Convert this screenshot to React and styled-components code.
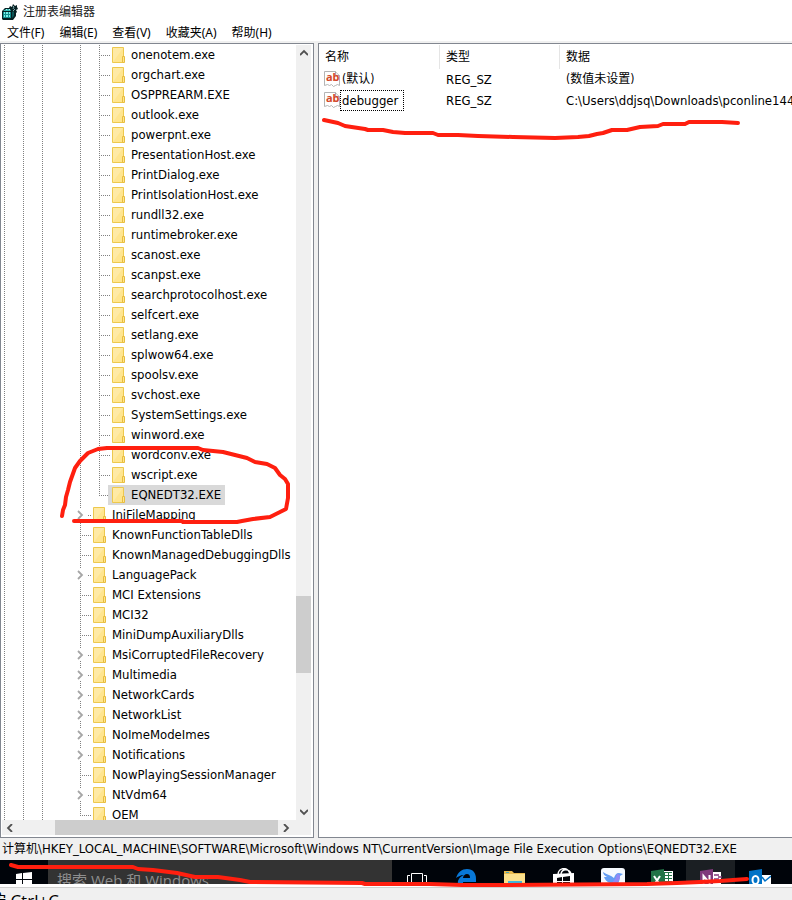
import React from "react";
import styled, { createGlobalStyle, css } from "styled-components";

const GlobalStyle = createGlobalStyle`
  * { box-sizing: border-box; }
  html, body { margin: 0; padding: 0; }
  body {
    font-family: "DejaVu Sans Condensed", "Noto Sans CJK SC", sans-serif;
    font-size: 12px;
    color: #000;
    background: #f0f0f0;
  }
  button { font: inherit; color: inherit; border: 0; padding: 0; background: none; }
`;

const Screen = styled.div`
  position: relative;
  display: flex;
  flex-direction: column;
  height: 100vh;
  overflow: hidden;
`;

const TitleBar = styled.header`
  display: flex;
  align-items: center;
  gap: 5px;
  height: 23px;
  padding-left: 2px;
  background: #fff;
`;

const Title = styled.h1`
  margin: 0;
  font-size: 12px;
  font-weight: 400;
  line-height: 20px;
  color: #222;
`;

const MenuBar = styled.nav`
  display: flex;
  gap: 1px;
  height: 18px;
  background: #fff;
`;

const MenuButton = styled.button`
  padding: 0 7px;
  font-family: "Noto Sans", "Noto Sans CJK SC", sans-serif;
  line-height: 20px;
  white-space: nowrap;
`;

const Panes = styled.main`
  display: grid;
  grid-template-columns: 314px minmax(0, 1fr);
  gap: 4px;
  flex: 1;
  min-height: 0;
  padding-top: 2px;
`;

const TreePane = styled.section`
  display: grid;
  grid-template-columns: minmax(0, 1fr) 15px;
  grid-template-rows: minmax(0, 1fr) 15px;
  padding: 1px 2px 2px 1px;
  border: 1px solid #828790;
  background: #fff;
  min-height: 0;
`;

const Tree = styled.ul`
  margin: 0;
  padding: 0 0 0 2px;
  list-style: none;
  overflow: hidden;
`;

const TreeRow = styled.li`
  display: flex;
  height: 20px;
`;

const verticalDots = css`
  background-image: repeating-linear-gradient(to bottom, #808080 0 1px, transparent 1px 2px);
  background-repeat: no-repeat;
`;

const Guide = styled.span`
  flex: none;
  width: 19px;
  ${verticalDots}
  background-size: ${(p) => (p.$blank ? "0 0" : "1px 100%")};
`;

const Branch = styled.span`
  flex: none;
  width: 11px;
  background-image:
    repeating-linear-gradient(to bottom, #808080 0 1px, transparent 1px 2px),
    repeating-linear-gradient(to right, #808080 0 1px, transparent 1px 2px);
  background-repeat: no-repeat;
  background-size: 1px ${(p) => (p.$last ? "50%" : "100%")}, 11px 1px;
  background-position: 0 0, 0 10px;
`;

const Expander = styled.button`
  flex: none;
  width: 19px;
  height: 20px;
  margin: 0 -4px 0 -4px;
`;

const Node = styled.button`
  display: flex;
  align-items: center;
  gap: 5px;
  height: 20px;
  margin-left: -2px;
  padding: 0 4px;
  font-size: 13px;
  line-height: 20px;
  white-space: nowrap;
  background: ${(p) => (p.$selected ? "#d9d9d9" : "transparent")};
`;

const NodeLabel = styled.span`
  line-height: 20px;
`;

const VerticalBar = styled.div`
  display: flex;
  flex-direction: column;
  background: #f0f0f0;
`;

const HorizontalBar = styled.div`
  grid-column: 1 / -1;
  display: flex;
  padding-right: 17px;
  background: #f0f0f0;
`;

const ArrowButton = styled.button`
  flex: none;
  width: 16px;
  height: 16px;
  display: grid;
  place-items: center;
`;

const TrackSpace = styled.span`
  flex: ${(p) => p.$share} 1 0;
`;

const Thumb = styled.span`
  flex: ${(p) => p.$share} 1 0;
  background: #cdcdcd;
`;

const ListPane = styled.section`
  min-width: 0;
  padding-top: 1px;
  border: 1px solid #828790;
  border-right: 0;
  background: #fff;
  overflow: hidden;
`;

const ValueTable = styled.table`
  width: 100%;
  table-layout: fixed;
  border-collapse: separate;
  border-spacing: 0;
`;

const HeadCell = styled.th`
  width: ${(p) => p.$width || "auto"};
  height: 24px;
  padding: 0 6px;
  border-right: 1px solid ${(p) => (p.$width ? "#e5e5e5" : "transparent")};
  text-align: left;
  font-weight: 400;
  line-height: 24px;
`;

const Cell = styled.td`
  height: 21px;
  padding: 0 0 0 6px;
  font-size: ${(p) => (p.$latin ? "13px" : "12px")};
  line-height: 21px;
  white-space: nowrap;
`;

const NameCell = styled(Cell)`
  padding-left: 5px;
`;

const NameBox = styled.div`
  display: flex;
  align-items: center;
`;

const ValueName = styled.span`
  height: 21px;
  padding: 0 5px 0 1px;
  border: 1px dotted ${(p) => (p.$focused ? "#000" : "transparent")};
  font-size: ${(p) => (p.$focused ? "13px" : "12px")};
  line-height: 19px;
`;

const StatusBar = styled.footer`
  height: 22px;
  padding-left: 2px;
  font-size: 13px;
  line-height: 22px;
  white-space: nowrap;
  overflow: hidden;
`;

const RootName = styled.span`
  font-size: 12px;
`;

const Taskbar = styled.div`
  flex: none;
  display: flex;
  height: 24px;
  overflow: hidden;
  background: #00040a;
`;

const StartButton = styled.button`
  flex: none;
  display: grid;
  place-items: center;
  width: 48px;
  height: 40px;
`;

const SearchBox = styled.input`
  flex: 0 0 344px;
  width: 344px;
  height: 40px;
  padding: 0 9px;
  border: 0;
  border-radius: 0;
  background: #333;
  font-family: "Open Sans", "Noto Sans CJK SC", sans-serif;
  font-size: 15px;
  &::placeholder { color: #8f8f8f; opacity: 1; }
`;

const TaskButton = styled.button`
  flex: none;
  display: flex;
  justify-content: center;
  align-items: flex-start;
  width: 49px;
  height: 40px;
  padding-top: 8px;
  background: ${(p) => (p.$active ? "#1b1f23" : "transparent")};
`;

const LowerPage = styled.div`
  flex: none;
  height: 16px;
  border-top: 3px solid #fff;
  background: #f0f0f0;
  overflow: hidden;
`;

const Hint = styled.p`
  margin: 0 0 0 -11px;
  border-top: 1px solid #d0d0d0;
  font-family: "Open Sans", "Noto Sans CJK SC", sans-serif;
  font-size: 17px;
  line-height: 26px;
  white-space: nowrap;
`;

const Marks = styled.svg`
  position: absolute;
  top: 0;
  left: 0;
  pointer-events: none;
`;

const childKeys = [
  "onenotem.exe", "orgchart.exe", "OSPPREARM.EXE", "outlook.exe", "powerpnt.exe",
  "PresentationHost.exe", "PrintDialog.exe", "PrintIsolationHost.exe", "rundll32.exe",
  "runtimebroker.exe", "scanost.exe", "scanpst.exe", "searchprotocolhost.exe",
  "selfcert.exe", "setlang.exe", "splwow64.exe", "spoolsv.exe", "svchost.exe",
  "SystemSettings.exe", "winword.exe", "wordconv.exe", "wscript.exe", "EQNEDT32.EXE",
];

const siblingKeys = [
  ["IniFileMapping", true], ["KnownFunctionTableDlls", false],
  ["KnownManagedDebuggingDlls", false], ["LanguagePack", true],
  ["MCI Extensions", false], ["MCI32", false], ["MiniDumpAuxiliaryDlls", false],
  ["MsiCorruptedFileRecovery", true], ["Multimedia", true], ["NetworkCards", true],
  ["NetworkList", true], ["NoImeModeImes", true], ["Notifications", true],
  ["NowPlayingSessionManager", false], ["NtVdm64", true], ["OEM", false],
];

const FolderIcon = () => (
  <svg width="14" height="16" viewBox="0 0 14 16" aria-hidden="true">
    <path d="M.5.5h11v15H.5z" fill="#ffe58f" stroke="#edc84d" />
    <path d="M1 15V1h10z" fill="#ffeaa5" />
    <path d="M10.5 15.5v-6h2v6z" fill="#ffe58f" stroke="#e8bd3e" />
  </svg>
);

const Chevron = ({ d, color = "#505050" }) => (
  <svg width="8" height="8" viewBox="0 0 8 8" fill="none" stroke={color} strokeWidth="1.8" aria-hidden="true">
    <path d={d} />
  </svg>
);

const ExpandMark = () => (
  <svg width="19" height="20" viewBox="0 0 19 20" fill="none" aria-hidden="true">
    <path d="M4.500 0v4M4.500 16v4" stroke="#808080" strokeDasharray="1 1" />
    <path d="M2 6l4 4-4 4" stroke="#a6a6a6" strokeWidth="1.8" />
    <path d="M12 10.500h4" stroke="#808080" strokeDasharray="1 1" />
  </svg>
);

const RegistryIcon = () => (
  <svg width="16" height="17" viewBox="0 0 16 17" aria-hidden="true">
    <path d="M0 8l3-3h4l1-2 2 1 1-3 2 2 2-1v2l1 2-2 1 1 2-1 1v3l-3 4H1l-1-1z" fill="#062022" />
    <path d="M1 9h8v6H1z" fill="#128f8f" />
    <path d="M1 8l3-2h4l1 2z" fill="#35b9b5" />
    <path d="M2 9h1v2H2zM4 9h2v2H4zM7 9h1v2H7zM2 12h1v2H2zM4 12h2v2H4zM7 12h1v2H7z" fill="#7cf0ea" />
    <path d="M4 6h1v1H4zM7 6h1v1H7z" fill="#a6f5f0" />
    <path d="M11 3l1 1-1 2M13 6l-2 2" stroke="#7ba9ac" fill="none" />
    <path d="M10 9l2-1v5l-2 2z" fill="#0c5557" />
  </svg>
);

const StringIcon = () => (
  <svg width="16" height="17" viewBox="0 0 16 17" aria-hidden="true">
    <path d="M.5 14.500V.5h11l4 4v10l-2-1-2 1-2 1-2-2-2 1-2-1z" fill="#fff" stroke="#b4b4b4" />
    <path d="M11.500.5v4h4" fill="#eee" stroke="#a6a6a6" />
    <text x="2" y="10" fontSize="11" fontWeight="700" fontFamily="Noto Sans, sans-serif" fill="#d3492b">ab</text>
  </svg>
);

const WindowsLogo = () => (
  <svg width="16" height="16" viewBox="0 0 16 16" fill="#fff" aria-hidden="true">
    <path d="M0 2l6-1v6H0zM7 1l9-1v7H7zM0 8h6v7l-6-1zM7 8h9v8l-9-1z" />
  </svg>
);

const TaskViewIcon = () => (
  <svg width="20" height="24" viewBox="0 0 20 24" fill="none" stroke="#fff" aria-hidden="true">
    <path d="M4.500 16.500v-11h11v11zM3 7.500H.5v8H3M17 7.500h2.500v8H17" />
  </svg>
);

const EdgeIcon = () => (
  <svg width="20" height="24" viewBox="0 0 20 24" fill="#0878d8" aria-hidden="true">
    <path d="M0 10C2 4 6 1 11 1c6 0 9 4 9 10v3H7c0 3 3 5 7 5 2 0 4-1 5-2v4c-2 1-4 2-7 2-7 0-11-5-10-10 1-3 3-5 6-6-4 0-6 2-8 3zm7 0h7c0-3-1-4-3-4s-4 2-4 4z" />
  </svg>
);

const ExplorerIcon = () => (
  <svg width="22" height="24" viewBox="0 0 22 24" aria-hidden="true">
    <path d="M0 3h8l2 2h11v15H0z" fill="#e8b94d" />
    <path d="M0 6h21v14H0z" fill="#fbe08c" />
    <path d="M2 4h3v1H2z" fill="#4aa8bd" />
    <path d="M4 13h14v7H4z" fill="#3fb7dc" />
  </svg>
);

const StoreIcon = () => (
  <svg width="22" height="24" viewBox="0 0 22 24" aria-hidden="true">
    <path d="M5 7c0-8 11-9 12 0M8 6c1-6 9-5 10 0" fill="none" stroke="#fff" strokeWidth="1.500" />
    <path d="M0 6l21-1v15l-21-2z" fill="#fff" />
    <path d="M4 10l5-1v4H4zM10 9l7-1v5h-7zM4 14h5v3H4zM10 14h7v4h-7z" fill="#05070b" />
  </svg>
);

const BirdIcon = () => (
  <svg width="24" height="24" viewBox="0 0 24 24" aria-hidden="true">
    <rect width="24" height="24" rx="3" fill="#f5faff" />
    <path d="M2 4c4 3 8 3 11 6 1-3 2-5 5-5l4 1-3 2c0 6-3 10-8 11-3 0-5-1-7-3 2 0 4 0 5-1-3-1-5-3-6-6h3C4 8 2 6 2 4z" fill="#629cf3" />
    <path d="M10 15c4-2 5-6 6-9 2 0 3 1 3 2 0 5-4 9-9 9z" fill="#9288f5" />
  </svg>
);

const ExcelIcon = () => (
  <svg width="22" height="24" viewBox="0 0 22 24" aria-hidden="true">
    <path d="M11 3h11v18H11z" fill="#fff" />
    <path d="M12 4h9v15h-9z" fill="#217346" />
    <path d="M14 5h3v2h-3zM18 5h3v2h-3zM14 8h3v2h-3zM18 8h3v2h-3zM14 11h3v2h-3zM18 11h3v2h-3z" fill="#fff" />
    <path d="M0 3l13-2v22L0 20z" fill="#217346" />
    <path d="M3 8l6 9M9 8l-6 9" stroke="#fff" strokeWidth="2" />
  </svg>
);

const OneNoteIcon = () => (
  <svg width="22" height="24" viewBox="0 0 22 24" aria-hidden="true">
    <path d="M11 4h10v16H11z" fill="#fff" />
    <path d="M14 7h5M14 11h5M18 9h4M18 13h4" stroke="#80397b" strokeWidth="1.500" />
    <path d="M0 3l13-2v22L0 20z" fill="#80397b" />
    <path d="M3.500 16V8l6 7V7" fill="none" stroke="#fff" strokeWidth="2" />
  </svg>
);

const OutlookIcon = () => (
  <svg width="22" height="24" viewBox="0 0 22 24" aria-hidden="true">
    <path d="M11 7h11v12H11z" fill="#fff" />
    <path d="M13 9l3 4 6-5" fill="none" stroke="#0072c6" strokeWidth="1.500" />
    <path d="M0 3l13-2v22L0 20z" fill="#0072c6" />
    <ellipse cx="6.500" cy="12" rx="3" ry="4" fill="none" stroke="#fff" strokeWidth="2" />
  </svg>
);

const tasks = [
  ["任务视图", TaskViewIcon], ["Edge", EdgeIcon], ["文件资源管理器", ExplorerIcon],
  ["应用商店", StoreIcon], ["Bird", BirdIcon], ["Excel", ExcelIcon],
  ["OneNote", OneNoteIcon], ["Outlook", OutlookIcon],
];

const AncestorGuides = () => (
  <>
    <Guide /><Guide /><Guide /><Guide $blank />
  </>
);

export default function App() {
  return (
    <>
      <GlobalStyle />
      <Screen>
        <TitleBar>
          <RegistryIcon />
          <Title>注册表编辑器</Title>
        </TitleBar>
        <MenuBar>
          {["文件(F)", "编辑(E)", "查看(V)", "收藏夹(A)", "帮助(H)"].map((m) => (
            <MenuButton key={m}>{m}</MenuButton>
          ))}
        </MenuBar>
        <Panes>
          <TreePane>
            <Tree>
              {childKeys.map((name, i) => {
                const last = i === childKeys.length - 1;
                return (
                  <TreeRow key={name}>
                    <Guide /><Guide /><Guide $blank={false} /><Guide $blank />
                    <Guide />
                    <Branch $last={last} />
                    <Node $selected={last}><FolderIcon /><NodeLabel>{name}</NodeLabel></Node>
                  </TreeRow>
                );
              })}
              {siblingKeys.map(([name, expandable], i) => (
                <TreeRow key={name}>
                  <AncestorGuides />
                  {expandable
                    ? <Expander aria-label={`展开 ${name}`}><ExpandMark /></Expander>
                    : <Branch $last={i === siblingKeys.length - 1} />}
                  <Node><FolderIcon /><NodeLabel>{name}</NodeLabel></Node>
                </TreeRow>
              ))}
            </Tree>
            <VerticalBar>
              <ArrowButton aria-label="向上滚动"><Chevron d="M0 6l4-4 4 4" /></ArrowButton>
              <TrackSpace $share={535} />
              <Thumb $share={77} />
              <TrackSpace $share={131} />
              <ArrowButton aria-label="向下滚动"><Chevron d="M0 2l4 4 4-4" /></ArrowButton>
            </VerticalBar>
            <HorizontalBar>
              <ArrowButton aria-label="向左滚动"><Chevron d="M6 0L2 4l4 4" /></ArrowButton>
              <TrackSpace $share={37} />
              <Thumb $share={223} />
              <ArrowButton aria-label="向右滚动"><Chevron d="M2 0l4 4-4 4" /></ArrowButton>
            </HorizontalBar>
          </TreePane>
          <ListPane>
            <ValueTable>
              <thead>
                <tr>
                  <HeadCell $width="121px">名称</HeadCell>
                  <HeadCell $width="120px">类型</HeadCell>
                  <HeadCell>数据</HeadCell>
                </tr>
              </thead>
              <tbody>
                <tr>
                  <NameCell><NameBox><StringIcon /><ValueName>(默认)</ValueName></NameBox></NameCell>
                  <Cell $latin>REG_SZ</Cell>
                  <Cell>(数值未设置)</Cell>
                </tr>
                <tr>
                  <NameCell><NameBox><StringIcon /><ValueName $focused>debugger</ValueName></NameBox></NameCell>
                  <Cell $latin>REG_SZ</Cell>
                  <Cell $latin>C:\Users\ddjsq\Downloads\pconline144</Cell>
                </tr>
              </tbody>
            </ValueTable>
          </ListPane>
        </Panes>
        <StatusBar>
          <RootName>计算机</RootName>
          \HKEY_LOCAL_MACHINE\SOFTWARE\Microsoft\Windows NT\CurrentVersion\Image File Execution Options\EQNEDT32.EXE
        </StatusBar>
        <Taskbar>
          <StartButton aria-label="开始"><WindowsLogo /></StartButton>
          <SearchBox aria-label="搜索" placeholder="搜索 Web 和 Windows" />
          {tasks.map(([label, Icon]) => (
            <TaskButton key={label} aria-label={label} $active={label === "OneNote"}><Icon /></TaskButton>
          ))}
        </Taskbar>
        <LowerPage><Hint>按 Ctrl+C</Hint></LowerPage>
        <Marks width="792" height="900" viewBox="0 0 792 900" fill="none" stroke="#ff1f0f" strokeWidth="4" strokeLinecap="round" strokeLinejoin="round" aria-hidden="true">
          <path d="M324 120L338 123L345 126L365 129L368 130L383 130L393 132L405 133L433 133L438 135L458 135L478 136L513 137L555 138L578 137L589 136L597 134L603 133L612 130L627 130L640 127L658 126L663 124L685 124L689 122L722 122L738 123" />
          <path d="M62 516L63 510L65 505L66 497L68 490L70 482L75 468L80 461L88 453L98 449L107 448L198 448L203 450L223 452L235 455L247 458L255 462L267 464L275 468L280 475L285 479L288 484L288 498L286 509L280 512L270 517L253 519L242 521L237 522L183 522L182 521L74 521" />
          <path d="M11 865L18 867L133 867L138 869L153 870L177 873L195 877L218 877L240 880L250 882L362 883L365 884L430 884L462 885L503 885L647 884L677 883L700 882L720 881L733 880L747 879" />
        </Marks>
      </Screen>
    </>
  );
}
